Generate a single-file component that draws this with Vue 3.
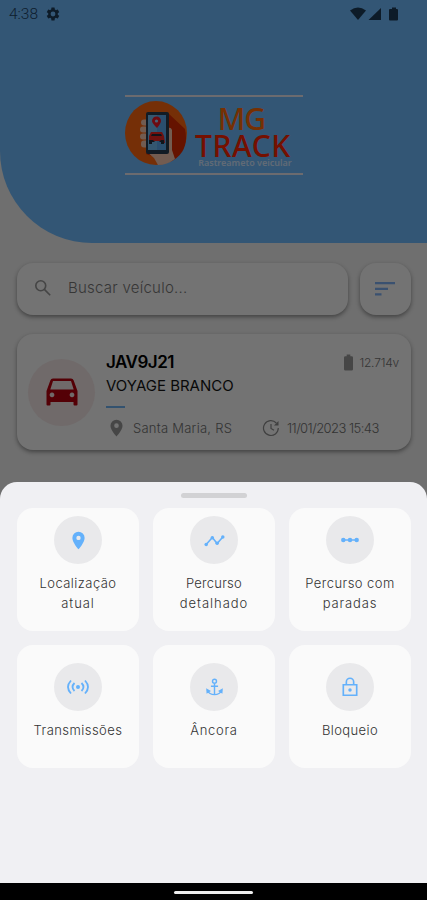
<script setup>
import { ref } from 'vue'

const vehicle = ref({
  plate: 'JAV9J21',
  model: 'VOYAGE BRANCO',
  place: 'Santa Maria, RS',
  date: '11/01/2023 15:43',
  battery: '12.714v'
})

const search = ref('')

// bottom sheet options, spacing = tracking of each line in px
const actions = [
  { id: 'location', lines: [{ text: 'Localização', spacing: 0.45 }, { text: 'atual', spacing: 0.9 }] },
  { id: 'route', lines: [{ text: 'Percurso', spacing: 0.25 }, { text: 'detalhado', spacing: 0.95 }] },
  { id: 'stops', lines: [{ text: 'Percurso com', spacing: 0.45 }, { text: 'paradas', spacing: 0.85 }] },
  { id: 'signal', lines: [{ text: 'Transmissões', spacing: 0.45 }] },
  { id: 'anchor', lines: [{ text: 'Âncora', spacing: 0.7 }] },
  { id: 'lock', lines: [{ text: 'Bloqueio', spacing: 0.4 }] }
]
</script>

<template>
  <div class="app">
    <main class="page">
      <header class="header">
        <div class="status">
          <span class="clock">4:38</span>
          <svg class="gear" viewBox="0 0 24 24" width="16" height="16">
            <path d="M19.14 12.94c.04-.3.06-.61.06-.94s-.02-.64-.07-.94l2.03-1.58a.49.49 0 0 0 .12-.61l-1.92-3.32a.49.49 0 0 0-.59-.22l-2.39.96a7 7 0 0 0-1.62-.94l-.36-2.54A.48.48 0 0 0 13.92 2.4h-3.84a.47.47 0 0 0-.47.41l-.36 2.54c-.59.24-1.13.57-1.62.94l-2.39-.96a.48.48 0 0 0-.59.22L2.74 8.87a.47.47 0 0 0 .12.61l2.03 1.58c-.05.3-.09.63-.09.94s.02.64.07.94l-2.03 1.58a.49.49 0 0 0-.12.61l1.92 3.32c.12.22.37.29.59.22l2.39-.96c.5.38 1.03.7 1.62.94l.36 2.54c.05.24.24.41.48.41h3.84c.24 0 .44-.17.47-.41l.36-2.54a7 7 0 0 0 1.62-.94l2.39.96c.22.08.47 0 .59-.22l1.92-3.32a.47.47 0 0 0-.12-.61zM12 15.6a3.6 3.6 0 1 1 0-7.2 3.6 3.6 0 0 1 0 7.2z" />
          </svg>
          <svg class="system" viewBox="0 0 48 14" width="48" height="14">
            <path d="M0 3.500Q8 -2.500 16 3.500L8 13z" />
            <path d="M31 1v12H18.500z" />
            <path d="M40 2h2V.5h4V2h1q1 0 1 1v9.500q0 1-1 1h-7q-1 0-1-1V3q0-1 1-1z" />
          </svg>
        </div>
        <div class="logo">
          <svg class="badge" viewBox="0 0 62 64" width="62" height="64">
            <ellipse cx="31" cy="32" rx="31" ry="32" fill="#ff6810" />
            <path d="M43 12L60 28Q65 51 45 61L21 53z" fill="#dc2a00" />
            <g fill="#f8c8b0">
              <rect x="16" y="18.500" width="8" height="6" rx="3" />
              <rect x="15" y="25.500" width="8" height="6" rx="3" />
              <rect x="15" y="32.500" width="8" height="6" rx="3" />
              <rect x="16" y="39.500" width="8" height="7" rx="3" />
              <path d="M22 51l7 6 4 7q9 0 17-6l-3-9V29q-1-3-4-2v25z" />
            </g>
            <rect x="21" y="11" width="23" height="42" rx="2" fill="#283b50" />
            <rect x="23" y="14" width="18" height="35" fill="#72bdf4" />
            <path d="M32 14v35h9V14z" fill="#5caaf0" />
            <path d="M32 27q-5-5-5-7a4 4 0 0 1 9 0q0 2-4 7z" fill="#ee1723" />
            <circle cx="31.500" cy="20" r="1.600" fill="#9fd4ff" />
            <path d="M24 35l2-4h11l2 4 1 7h-3v-2H27v2h-3z" fill="#f02522" />
            <path d="M27 33h9l1 2H26zM24 39h4l2 2h4l2-2h3v4h-3v-2H27v2h-3z" fill="#222d3b" />
          </svg>
          <div class="wordmark">
            <span class="mg">MG</span>
            <span class="track">TRACK</span>
            <span class="tagline">Rastreameto veicular</span>
          </div>
        </div>
      </header>

      <div class="toolbar">
        <label class="search">
          <svg viewBox="0 0 20 20" width="18" height="18">
            <circle cx="7.500" cy="7.500" r="5.500" />
            <path d="M11.500 11.500L18 18" />
          </svg>
          <input v-model="search" type="text" placeholder="Buscar veículo..." />
        </label>
        <button class="sort" aria-label="Ordenar">
          <svg viewBox="0 0 20 14" width="20" height="14">
            <path d="M0 1.200h20M0 6.800h13M0 12.400h6.500" />
          </svg>
        </button>
      </div>

      <section class="card">
        <div class="car">
          <svg viewBox="0 0 32 28" width="32" height="28">
            <path fill-rule="evenodd" d="M7 .5h18q2 0 2.700 2L31.500 13v13.500q0 1-1 1H28.500q-1 0-1-1V24h-23v2.500q0 1-1 1H1.500q-1 0-1-1V13L4.300 2.500Q5 .5 7 .5zM7 3L4.300 11.500h23.400L25 3zM6 14.500a2.400 2.400 0 1 0 .01 0zM26 14.500a2.400 2.400 0 1 0 .01 0z" />
          </svg>
        </div>
        <div class="info">
          <div class="top">
            <span class="plate">{{ vehicle.plate }}</span>
            <span class="battery">
              <svg viewBox="0 0 10 18" width="9" height="17">
                <path d="M3 2V0h4v2h1.500Q10 2 10 3.500v13q0 1.500-1.500 1.500h-7Q0 18 0 16.500v-13Q0 2 1.500 2z" />
              </svg>
              {{ vehicle.battery }}
            </span>
          </div>
          <div class="model">{{ vehicle.model }}</div>
          <div class="dash"></div>
          <div class="details">
            <svg class="pin" viewBox="0 0 14 18" width="13" height="18">
              <path fill-rule="evenodd" d="M7 0a6.500 6.500 0 0 0-6.500 6.500C.5 11 7 18 7 18s6.500-7 6.500-11.500A6.500 6.500 0 0 0 7 0zm0 4a2.500 2.500 0 1 1 0 5 2.500 2.500 0 0 1 0-5z" />
            </svg>
            <span class="place">{{ vehicle.place }}</span>
            <svg class="update" viewBox="0 0 18 18" width="18" height="18">
              <path d="M14.300 4A7.400 7.400 0 1 0 16.300 9M9 5v4.500l3 1.700" />
              <path class="tip" d="M16.500 2v4.500H12z" />
            </svg>
            <span class="date">{{ vehicle.date }}</span>
          </div>
        </div>
      </section>
    </main>

    <div class="scrim"></div>

    <section class="sheet">
      <div class="handle"></div>
      <div class="grid">
        <button v-for="action in actions" :key="action.id" class="tile">
          <span class="circle">
            <svg v-if="action.id === 'location'" viewBox="0 0 24 24" width="21" height="21">
              <path class="solid" fill-rule="evenodd" d="M12 2a7 7 0 0 0-7 7c0 5.250 7 13 7 13s7-7.750 7-13a7 7 0 0 0-7-7zm0 4.500a2.500 2.500 0 1 1 0 5 2.500 2.500 0 0 1 0-5z" />
            </svg>
            <svg v-else-if="action.id === 'route'" viewBox="0 0 24 24" width="21" height="21">
              <path d="M2.500 16.500l7-8 5.500 7L21.500 8" />
              <g class="solid">
                <circle cx="2.500" cy="16.500" r="2" />
                <circle cx="9.500" cy="8.800" r="2" />
                <circle cx="15" cy="15.200" r="2" />
                <circle cx="21.500" cy="8" r="2" />
              </g>
            </svg>
            <svg v-else-if="action.id === 'stops'" viewBox="0 0 24 24" width="20" height="20">
              <path d="M3 12h18" />
              <g class="solid">
                <circle cx="4" cy="12" r="2.700" />
                <circle cx="12" cy="12" r="2.700" />
                <circle cx="20" cy="12" r="2.700" />
              </g>
            </svg>
            <svg v-else-if="action.id === 'signal'" viewBox="0 0 24 24" width="24" height="24">
              <path d="M5 5.500Q-1 12 5 18.500M8.500 8q-4 4 0 8M15.500 8q4 4 0 8M19 5.500Q25 12 19 18.500" />
              <circle class="solid" cx="12" cy="12" r="2" />
            </svg>
            <svg v-else-if="action.id === 'anchor'" viewBox="0 0 24 24" width="19" height="19">
              <circle cx="12" cy="4" r="2.500" />
              <path d="M12 6.500v14M7.500 10.500h9M3 15.500c1 3 5 5.500 9 5.500s8-2.500 9-5.500" />
              <path class="solid" d="M1.500 13l6 3.500-5.500 3.500zM22.500 13l-6 3.500 5.500 3.500z" />
            </svg>
            <svg v-else viewBox="0 0 24 24" width="22" height="22">
              <path d="M4.700 9.500h14.600v11.500H4.700zM8 9.500V6.500a4 4 0 0 1 8 0v3" />
              <circle class="solid" cx="12" cy="15.200" r="1.900" />
            </svg>
          </span>
          <span class="label">
            <span
              v-for="line in action.lines"
              :key="line.text"
              :style="{ letterSpacing: line.spacing + 'px' }"
            >{{ line.text }}</span>
          </span>
        </button>
      </div>
    </section>

    <footer class="navbar"><span></span></footer>
  </div>
</template>

<style>
body {
  background: #000;
}
</style>

<style scoped>
.app {
  position: relative;
  display: flex;
  flex-direction: column;
  width: 427px;
  height: 900px;
  overflow: hidden;
  font-family: Inter, "Open Sans", sans-serif;
}

.app *,
.app *::before {
  box-sizing: border-box;
}

button {
  border: 0;
  padding: 0;
  font-family: inherit;
}

.page {
  height: 883px;
  background: #f1f1f1;
}

/* --- Header --- */
.header {
  height: 243px;
  background: #6fbbfe;
  border-bottom-left-radius: 92px;
}

.status {
  display: flex;
  align-items: center;
  height: 28px;
  padding: 0 29px 0 9px;
  color: #204466;
  fill: #1e3c58;
}

.clock {
  width: 36px;
  font-family: Roboto, sans-serif;
  font-size: 15.5px;
  font-weight: 300;
}

.system {
  margin-left: auto;
}

.logo {
  display: flex;
  width: 178px;
  height: 80px;
  margin: 67px 0 0 125px;
  padding-top: 4px;
  border-top: 2px solid #eceaf2;
  border-bottom: 2px solid #eceaf2;
}

.wordmark {
  display: flex;
  flex: 1;
  flex-direction: column;
  align-items: center;
  padding-top: 4px;
  font-family: "Noto Sans", sans-serif;
  white-space: nowrap;
}

.mg,
.track {
  font-size: 30px;
  font-weight: 500;
  line-height: 27px;
}

.mg {
  margin-right: 7px;
  color: #ff6a08;
  letter-spacing: -0.8px;
}

.track {
  margin-right: 4px;
  color: #ff2400;
  letter-spacing: 0.6px;
}

.tagline {
  margin-top: -1px;
  color: #d4e8ff;
  font-size: 9px;
  font-weight: 600;
  line-height: 9px;
}

/* --- Search --- */
.toolbar {
  display: flex;
  gap: 12px;
  padding: 20px 16px 0 17px;
}

.search,
.sort {
  height: 52px;
  background: #fafafa;
  border-radius: 16px;
  box-shadow: 0 2px 4px rgba(0, 0, 0, 0.4);
}

.search {
  display: flex;
  align-items: center;
  width: 331px;
  padding: 0 0 2px 17px;
}

.search svg {
  fill: none;
  stroke: #969696;
  stroke-width: 1.8;
}

.search input {
  flex: 1;
  min-width: 0;
  margin-left: 16px;
  padding: 0 0 2px;
  border: 0;
  outline: 0;
  background: none;
  font: 300 15px Inter, sans-serif;
  letter-spacing: 0.25px;
}

.search input::placeholder {
  color: #777;
  opacity: 1;
}

.sort {
  display: flex;
  align-items: center;
  justify-content: center;
  width: 51px;
  padding-right: 1px;
}

.sort svg {
  fill: none;
  stroke: #7fb0f5;
  stroke-width: 2.2;
}

/* --- Vehicle card --- */
.card {
  display: flex;
  align-items: center;
  height: 116px;
  margin: 19px 16px 0 17px;
  padding: 0 12px 0 11px;
  background: #fafafa;
  border-radius: 16px;
  box-shadow: 0 2px 4px rgba(0, 0, 0, 0.4);
}

.car {
  display: flex;
  align-items: center;
  justify-content: center;
  width: 67px;
  height: 67px;
  border-radius: 50%;
  background: #f5e7e7;
}

.car svg {
  fill: #b8000e;
}

.info {
  flex: 1;
  height: 100%;
  margin-left: 11px;
  padding-top: 17px;
}

.top {
  display: flex;
  justify-content: space-between;
  height: 23px;
}

.plate {
  color: #000;
  font-size: 17px;
  font-weight: 600;
  line-height: 23px;
  letter-spacing: -0.5px;
}

.battery {
  display: flex;
  align-items: center;
  gap: 6px;
  color: #757575;
  font-size: 12px;
  font-weight: 300;
  letter-spacing: -0.2px;
}

.battery svg,
.pin {
  fill: #999;
}

.model {
  color: #151515;
  font-size: 15px;
  line-height: 24px;
}

.dash {
  width: 19px;
  height: 2px;
  margin-top: 8px;
  background: #6fb3f2;
}

.details {
  display: flex;
  align-items: center;
  height: 18px;
  margin-top: 11px;
  padding-left: 4px;
  color: #707070;
  font-size: 13px;
  font-weight: 300;
  white-space: nowrap;
}

.place {
  width: 129px;
  margin-left: 10px;
  letter-spacing: 0.25px;
}

.update {
  fill: none;
  stroke: #8b8b8b;
  stroke-width: 1.2;
}

.update .tip {
  fill: #8b8b8b;
  stroke: none;
}

.date {
  margin-left: 7px;
  letter-spacing: -0.55px;
}

.scrim {
  position: absolute;
  inset: 0 0 17px;
  background: rgba(0, 0, 0, 0.54);
}

/* --- Bottom sheet --- */
.sheet {
  position: absolute;
  left: 0;
  right: 0;
  bottom: 17px;
  height: 401px;
  padding: 11px 15px 0 17px;
  background: #f0f0f3;
  border-radius: 17px 17px 0 0;
}

.handle {
  width: 66px;
  height: 5px;
  margin: 0 auto 10px 164px;
  border-radius: 3px;
  background: #d2d2d4;
}

.grid {
  display: grid;
  grid-template-columns: repeat(3, 122px);
  grid-auto-rows: 123px;
  gap: 14px;
}

.tile {
  display: flex;
  flex-direction: column;
  align-items: center;
  justify-content: center;
  padding-bottom: 10px;
  background: #fafafa;
  border-radius: 16px;
}

.circle {
  display: flex;
  align-items: center;
  justify-content: center;
  width: 48px;
  height: 48px;
  border-radius: 50%;
  background: #e9e9eb;
}

.circle svg {
  overflow: visible;
  fill: none;
  stroke: #64b1fb;
  stroke-width: 1.8;
}

.circle .solid {
  fill: #64b1fb;
  stroke: none;
}

.label {
  display: flex;
  flex-direction: column;
  align-items: center;
  margin-top: 9px;
  color: #333;
  font-size: 13px;
  font-weight: 300;
  line-height: 20px;
  white-space: nowrap;
}

/* --- Android navigation --- */
.navbar {
  display: flex;
  align-items: center;
  justify-content: center;
  height: 17px;
  padding-top: 2px;
  background: #000;
}

.navbar span {
  width: 79px;
  height: 3px;
  border-radius: 2px;
  background: #eee;
}
</style>
